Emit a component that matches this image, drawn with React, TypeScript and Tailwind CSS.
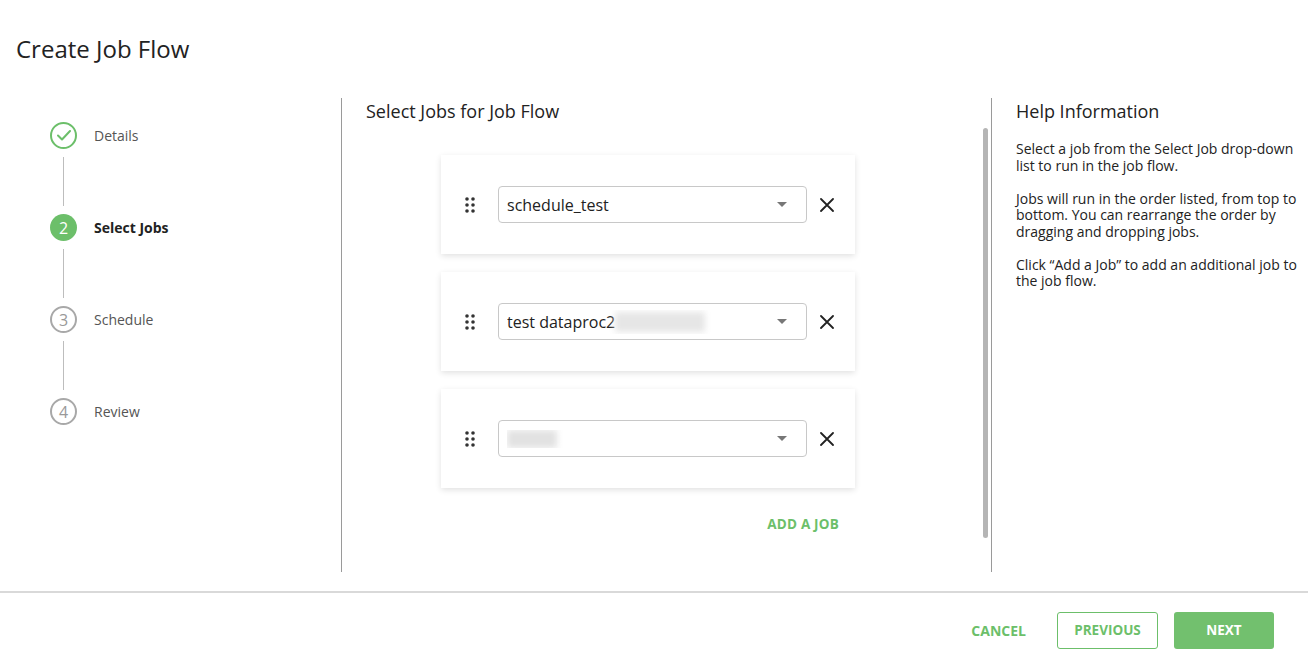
import React from "react";

const font = { fontFamily: '"Open Sans", "Liberation Sans", sans-serif' };

function DragHandle() {
  return (
    <svg width="10" height="16" viewBox="0 0 10 16" className="shrink-0">
      {[2, 8, 14].map((y) =>
        [2, 8].map((x) => <circle key={`${x}-${y}`} cx={x} cy={y} r="1.8" fill="#333" />)
      )}
    </svg>
  );
}

function Close() {
  return (
    <svg width="14" height="14" viewBox="0 0 14 14" className="shrink-0">
      <path d="M1 1L13 13M13 1L1 13" stroke="#222" strokeWidth="1.8" strokeLinecap="round" />
    </svg>
  );
}

function JobCard({ children }: { children: React.ReactNode }) {
  return (
    <div className="w-[414px] h-[99px] bg-white shadow-[0_2px_6px_rgba(0,0,0,0.12)] flex items-center pl-[24px] pr-[20px]">
      <DragHandle />
      <div className="ml-[23px] w-[309px] h-[37px] border border-[#c8c8c8] rounded-[4px] flex items-center pl-[8px] pr-[19px]">
        <div className="flex-1 flex items-center text-[16px] text-[#222] overflow-hidden whitespace-nowrap">{children}</div>
        <svg width="10" height="5" viewBox="0 0 10 5" className="shrink-0">
          <path d="M0 0H10L5 5Z" fill="#777" />
        </svg>
      </div>
      <div className="ml-[13px]">
        <Close />
      </div>
    </div>
  );
}

function Step({ state, n, label }: { state: "done" | "active" | "todo"; n: number; label: string }) {
  return (
    <div className="flex items-center h-[27px]">
      {state === "done" && (
        <div className="w-[27px] h-[27px] rounded-full border-2 border-[#6cbf6a] flex items-center justify-center">
          <svg width="14" height="11" viewBox="0 0 14 11">
            <path d="M1 5.5L5 9.5L13 1" stroke="#6cbf6a" strokeWidth="2" fill="none" strokeLinecap="round" strokeLinejoin="round" />
          </svg>
        </div>
      )}
      {state === "active" && (
        <div className="w-[27px] h-[27px] rounded-full bg-[#6cbf6a] flex items-center justify-center text-white text-[16px]">
          {n}
        </div>
      )}
      {state === "todo" && (
        <div className="w-[27px] h-[27px] rounded-full border-2 border-[#a8a8a8] flex items-center justify-center text-[#999] text-[16px]">
          {n}
        </div>
      )}
      <span
        className={`ml-[17px] text-[14px] ${state === "active" ? "font-bold text-[#222]" : "text-[#555]"}`}
      >
        {label}
      </span>
    </div>
  );
}

function Connector() {
  return (
    <div className="w-[27px] flex justify-center py-[8px]">
      <div className="w-px h-[49px] bg-[#bdbdbd]" />
    </div>
  );
}

export default function App() {
  return (
    <div style={font} className="w-[1308px] h-[663px] bg-white flex flex-col text-[#222]">
      <div className="h-[98px] flex items-center pl-[16px]">
        <h1 className="text-[24px] text-[#222]">Create Job Flow</h1>
      </div>
      <div className="flex h-[474px]">
        <div className="w-[342px] border-r border-[#9a9a9a] pl-[50px] pt-[24px]">
          <Step state="done" n={1} label="Details" />
          <Connector />
          <Step state="active" n={2} label="Select Jobs" />
          <Connector />
          <Step state="todo" n={3} label="Schedule" />
          <Connector />
          <Step state="todo" n={4} label="Review" />
        </div>
        <div className="w-[650px] border-r border-[#9a9a9a] flex">
          <div className="flex-1 pl-[24px]">
            <h2 className="text-[18px] leading-[24px] pt-[1px] text-[#222]">Select Jobs for Job Flow</h2>
            <div className="ml-[75px] mt-[32px] flex flex-col gap-[18px]">
              <JobCard>schedule_test</JobCard>
              <JobCard>
                <span>test dataproc2</span>
                <span className="inline-block w-[90px] h-[20px] bg-[#e6e6e6] blur-[3px]" />
              </JobCard>
              <JobCard>
                <span className="inline-block w-[50px] h-[18px] bg-[#e2e2e2] blur-[3px]" />
              </JobCard>
              <div className="w-[414px] flex justify-end pr-[16px] pt-[8px]">
                <span className="text-[13.5px] font-bold text-[#6cbf6a] tracking-[0.2px]">ADD A JOB</span>
              </div>
            </div>
          </div>
          <div className="w-[5px] mr-[3px] mt-[30px] h-[410px] rounded-full bg-[#b5b5b5]" />
        </div>
        <div className="flex-1 pl-[24px] pr-[8px]">
          <h2 className="text-[18px] leading-[24px] pt-[1px] text-[#222]">Help Information</h2>
          <div className="mt-[18px] text-[14px] leading-[16.5px] text-[#222] flex flex-col gap-[16.5px]">
            <p>Select a job from the Select Job drop-down list to run in the job flow.</p>
            <p>Jobs will run in the order listed, from top to bottom. You can rearrange the order by dragging and dropping jobs.</p>
            <p>Click “Add a Job” to add an additional job to the job flow.</p>
          </div>
        </div>
      </div>
      <div className="flex-1" />
      <div className="h-[72px] border-t-2 border-[#d9d9d9] flex items-start justify-end pt-[19px] pr-[34px]">
        <button className="h-[37px] px-[15px] pb-[1px] text-[14px] font-bold text-[#6cbf6a]">CANCEL</button>
        <button className="ml-[16px] h-[37px] w-[101px] border border-[#6cbf6a] rounded-[3px] text-[13.5px] font-bold text-[#6cbf6a]">
          PREVIOUS
        </button>
        <button className="ml-[16px] h-[37px] w-[100px] bg-[#72c06e] rounded-[3px] text-[13.5px] font-bold text-white">
          NEXT
        </button>
      </div>
    </div>
  );
}
